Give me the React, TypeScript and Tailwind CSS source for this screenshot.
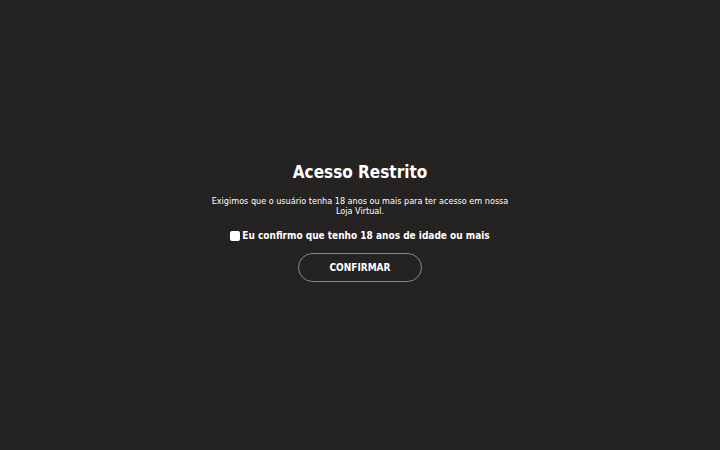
export default function App() {
  return (
    <div className="w-full h-[450px] bg-[#252322] flex justify-center pt-[161px] text-white" style={{ fontFamily: '"DejaVu Sans Condensed", "DejaVu Sans", sans-serif' }}>
      <div className="w-[300px] flex flex-col items-center text-center">
        <h1 className="text-[17px] leading-[22px] font-bold">Acesso Restrito</h1>
        <p className="mt-[13px] text-[9px] leading-[10px]">Exigimos que o usuário tenha 18 anos ou mais para ter acesso em nossa Loja Virtual.</p>
        <label className="mt-[12px] flex items-center gap-[2px] text-[10px] font-bold whitespace-nowrap">
          <span className="w-[10px] h-[10px] rounded-[2px] bg-white inline-block"></span>
          Eu confirmo que tenho 18 anos de idade ou mais
        </label>
        <button className="mt-[10px] w-[124px] h-[29px] rounded-full border border-[#8c8a88] text-[10px] font-bold">CONFIRMAR</button>
      </div>
    </div>
  );
}
